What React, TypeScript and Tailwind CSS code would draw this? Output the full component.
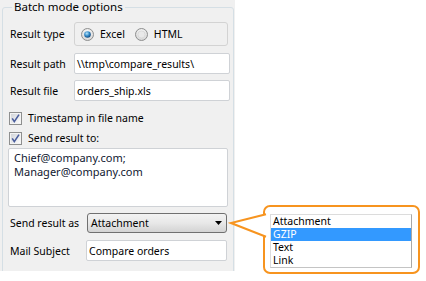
import React from "react";

const ORANGE = "#f7941f";

function Radio({checked}: {checked?: boolean}) {
    const id = checked ? "rb-on" : "rb-off";
    return (
        <svg width="13" height="13" viewBox="0 0 13 13" className="shrink-0">
            <defs>
                <radialGradient id={`${id}-bg`} cx="50%" cy="35%" r="65%">
                    <stop offset="0%" stopColor="#ffffff"/>
                    <stop offset="100%" stopColor="#d4d4d4"/>
                </radialGradient>
                <radialGradient id={`${id}-dot`} cx="40%" cy="35%" r="70%">
                    <stop offset="0%" stopColor="#b6e4fb"/>
                    <stop offset="55%" stopColor="#2f86c4"/>
                    <stop offset="100%" stopColor="#123f70"/>
                </radialGradient>
            </defs>
            <circle cx="6.5" cy="6.5" r="6" fill={`url(#${id}-bg)`} stroke="#8e8f8f"/>
            {checked
                ? <circle cx="6.5" cy="6.5" r="3.3" fill={`url(#${id}-dot)`}/>
                : <circle cx="6.5" cy="6.5" r="3.6" fill="#e9e9e9" stroke="#cfcfcf" strokeWidth="0.6"/>}
        </svg>
    );
}

function Checkbox() {
    return (
        <svg width="13" height="13" viewBox="0 0 13 13" className="shrink-0">
            <defs>
                <linearGradient id="cb-in" x1="0" y1="0" x2="1" y2="1">
                    <stop offset="0%" stopColor="#d2d5da"/>
                    <stop offset="100%" stopColor="#fbfbfb"/>
                </linearGradient>
            </defs>
            <rect x="0.5" y="0.5" width="12" height="12" fill="#f4f4f4" stroke="#8e8f8f"/>
            <rect x="2" y="2" width="9" height="9" fill="url(#cb-in)"/>
            <path d="M3.2 6.4 L5.3 9.6 L10 2.6" fill="none" stroke="#4a5d9c" strokeWidth="1.6"/>
        </svg>
    );
}

function Row({label, labelW, children, className}: {label: string, labelW: string, children: React.ReactNode, className: string}) {
    return (
        <div className={`flex items-center ${className}`}>
            <span className={`${labelW} shrink-0 pl-px`}>{label}</span>
            {children}
        </div>
    );
}

export default function App() {
    const items = ["Attachment", "GZIP", "Text", "Link"];

    return (
        <div className="relative w-[426px] h-[281px] bg-white overflow-hidden font-['Noto_Sans',sans-serif] text-[10.5px] leading-[14px] text-black">
            <div className="w-[235px] h-[271px] bg-[#f0f0f0] overflow-hidden pt-0">
                <fieldset className="ml-[2px] w-[232px] h-[300px] border border-[#d5dfe5] rounded-[3px] pl-[6px]">
                    <legend className="ml-[3px] px-[2px] text-[11.5px] leading-[14px]">Batch mode options</legend>

                    <Row label="Result type" labelW="w-[65px]" className="mt-[8px]">
                        <div className="flex items-center w-[154px] h-[24px] border border-[#d3d3d3] rounded-[3px] pl-[6px]">
                            <Radio checked/>
                            <span className="ml-[6px]">Excel</span>
                            <span className="ml-[10px]"><Radio/></span>
                            <span className="ml-[6px]">HTML</span>
                        </div>
                    </Row>

                    <Row label="Result path" labelW="w-[65px]" className="mt-[7px]">
                        <div className="flex items-center w-[156px] h-[21px] bg-white border border-[#cfd2d6] rounded-[2px] pl-[2px]">
                            \\tmp\compare_results\
                        </div>
                    </Row>

                    <Row label="Result file" labelW="w-[65px]" className="mt-[6px]">
                        <div className="flex items-center w-[156px] h-[21px] bg-white border border-[#cfd2d6] rounded-[2px] pl-[2px]">
                            orders_ship.xls
                        </div>
                    </Row>

                    <div className="flex items-center gap-[6px] h-[14px] mt-[10px]">
                        <Checkbox/>
                        <span>Timestamp in file name</span>
                    </div>
                    <div className="flex items-center gap-[6px] h-[14px] mt-[6px]">
                        <Checkbox/>
                        <span>Send result to:</span>
                    </div>

                    <div className="-ml-px mt-[3px] w-[220px] h-[59px] bg-white border border-[#cfd2d6] rounded-[2px] pl-[5px] pt-[2px] text-[11px] leading-[14px] text-[#101830]">
                        <div>Chief@company.com;</div>
                        <div>Manager@company.com</div>
                    </div>

                    <Row label="Send result as" labelW="w-[78px]" className="mt-[6px]">
                        <div className="flex items-center justify-between w-[140px] h-[20px] border border-[#707070] rounded-[3px] bg-gradient-to-b from-[#f3f3f3] via-[#e8e8e8] to-[#d3d3d3] pl-[3px] pr-[4px]">
                            <span>Attachment</span>
                            <svg width="7" height="4" viewBox="0 0 7 4">
                                <path d="M0 0 H7 L3.5 4 Z" fill="#000"/>
                            </svg>
                        </div>
                    </Row>

                    <Row label="Mail Subject" labelW="w-[77px]" className="mt-[7px]">
                        <div className="flex items-center w-[141px] h-[21px] bg-white border border-[#cfd2d6] rounded-[2px] pl-[2px]">
                            Compare orders
                        </div>
                    </Row>
                </fieldset>
            </div>

            {/* callout with the opened drop-down list */}
            <div className="absolute left-[263px] top-[205px] w-[157px] h-[69px] bg-white border-2 rounded-[7px] pl-[5px] pt-[7px]" style={{borderColor: ORANGE}}>
                <div className="w-[142px] h-[54px] border border-[#dcdcdc] border-r-[#a8a8a8] border-b-[#c4c4c4]">
                    {items.map((it) => (
                        <div key={it}
                             className={`h-[13px] leading-[13px] pl-[2px] ${it === "GZIP" ? "bg-[#3399ff] text-white" : ""}`}>
                            {it}
                        </div>
                    ))}
                </div>
            </div>
            <svg className="absolute left-[228px] top-[212px]" width="40" height="28" viewBox="0 0 40 28">
                <path d="M38 2.3 L3 11 L38 24.7" fill="#ffffff" stroke={ORANGE} strokeWidth="2" strokeLinejoin="miter"/>
            </svg>
        </div>
    );
}
